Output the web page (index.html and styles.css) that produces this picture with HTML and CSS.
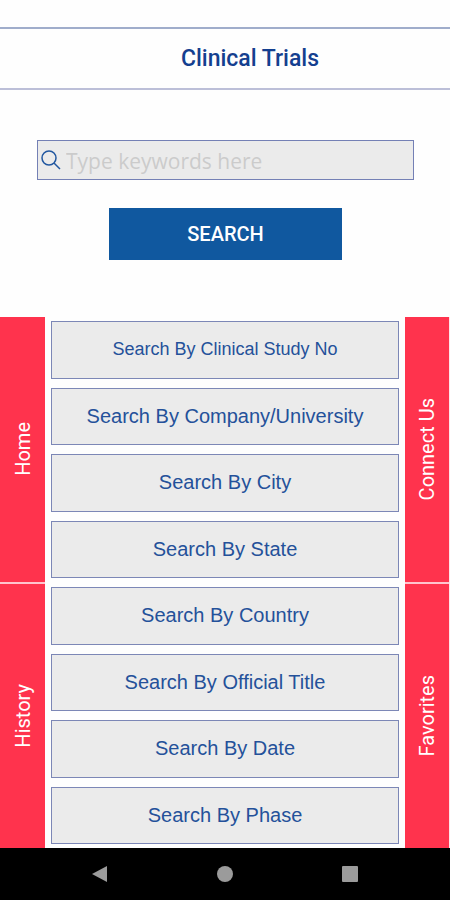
FILE: index.html
```html
<!DOCTYPE html>
<html lang="en">
<head>
    <meta charset="UTF-8">
    <meta name="viewport" content="width=device-width, initial-scale=1.0">
    <title>Clinical Trials</title>
    <link rel="stylesheet" href="styles.css">
</head>
<body>
    <header class="header">
        <h1>Clinical Trials</h1>
    </header>

    <form class="search-form">
        <div class="search-box">
            <svg class="search-icon" viewBox="0 0 20 20" aria-hidden="true">
                <circle cx="8" cy="8" r="7"></circle>
                <path d="M13 13L19 19"></path>
            </svg>
            <input id="keywords" type="text" placeholder="Type keywords here" aria-label="Keywords">
        </div>
        <button type="submit" class="search-button">SEARCH</button>
    </form>

    <main class="content">
        <nav class="side">
            <a href="#home"><span>Home</span></a>
            <a href="#history"><span>History</span></a>
        </nav>

        <div class="options">
            <button type="button" class="small">Search By Clinical Study No</button>
            <button type="button">Search By Company/University</button>
            <button type="button">Search By City</button>
            <button type="button">Search By State</button>
            <button type="button">Search By Country</button>
            <button type="button">Search By Official Title</button>
            <button type="button">Search By Date</button>
            <button type="button">Search By Phase</button>
        </div>

        <nav class="side side-right">
            <a href="#connect"><span>Connect Us</span></a>
            <a href="#favorites"><span>Favorites</span></a>
        </nav>
    </main>

    <footer class="system-bar">
        <button type="button" aria-label="Back">
            <svg viewBox="0 0 18 18"><path d="M16 1V17L1 9Z"></path></svg>
        </button>
        <button type="button" aria-label="Home screen">
            <svg viewBox="0 0 18 18"><circle cx="9" cy="9" r="8"></circle></svg>
        </button>
        <button type="button" aria-label="Recent apps">
            <svg viewBox="0 0 18 18"><rect x="1" y="1" width="16" height="16" rx="1"></rect></svg>
        </button>
    </footer>
</body>
</html>
```
FILE: styles.css
```css
* {
    box-sizing: border-box;
}

body {
    display: flex;
    flex-direction: column;
    min-height: 100vh;
    margin: 0;
    background: #fefefe;
    font-family: Roboto, sans-serif;
}

button {
    padding: 0;
    border: none;
    cursor: pointer;
}

.header {
    margin-top: 27px;
    padding: 16px 0 15px 50px;
    border-top: 2px solid #a0adcb;
    border-bottom: 2px solid #bcbfd8;
}

.header h1 {
    margin: 0;
    color: #143f8f;
    font-size: 23px;
    font-weight: 500;
    line-height: 28px;
    text-align: center;
}

.search-form {
    display: flex;
    flex-direction: column;
    align-items: center;
    gap: 28px;
    padding: 50px 36px 57px 37px;
}

.search-box {
    display: flex;
    align-items: center;
    gap: 5px;
    width: 100%;
    height: 40px;
    padding: 0 3px;
    border: 1px solid #7480b5;
    background: #ebebeb;
}

.search-icon {
    flex: none;
    width: 20px;
    height: 20px;
    fill: none;
    stroke: #2157a0;
    stroke-width: 1.5;
}

.search-box input {
    flex: 1;
    min-width: 0;
    padding: 2px 0 0;
    border: none;
    outline: none;
    background: transparent;
    color: #174a97;
    font-family: "Open Sans", sans-serif;
    font-size: 21px;
    font-weight: 400;
}

.search-box input::placeholder {
    color: #cbcbcb;
    opacity: 1;
}

.search-button {
    width: 62%;
    height: 52px;
    background: #10589f;
    color: #ffffff;
    font-family: Roboto, sans-serif;
    font-size: 20px;
    font-weight: 500;
}

.content {
    display: flex;
    flex: 1;
    gap: 6px;
}

.side {
    display: flex;
    flex: none;
    flex-direction: column;
    gap: 2px;
    width: 45px;
    background: #ffc4cd;
}

.side-right {
    border-right: 1px solid #ffe4e8;
}

.side a {
    display: flex;
    flex: 1;
    align-items: center;
    justify-content: center;
    background: #ff334d;
    color: #ffffff;
    font-size: 20px;
    text-decoration: none;
}

.side span {
    writing-mode: vertical-rl;
    transform: rotate(180deg);
}

.options {
    display: grid;
    flex: 1;
    grid-auto-rows: 1fr;
    gap: 9px;
    padding: 4px 0;
}

.options button {
    min-height: 48px;
    border: 1px solid #7c87b6;
    background: #ebebeb;
    color: #24519a;
    font-family: "Liberation Sans", Arial, sans-serif;
    font-size: 20px;
}

.options .small {
    font-size: 18px;
}

.system-bar {
    display: flex;
    align-items: center;
    justify-content: space-between;
    height: 52px;
    padding: 0 91px;
    background: #000000;
}

.system-bar button {
    display: flex;
    background: transparent;
}

.system-bar svg {
    width: 18px;
    height: 18px;
    fill: #9b9b9b;
}
```
